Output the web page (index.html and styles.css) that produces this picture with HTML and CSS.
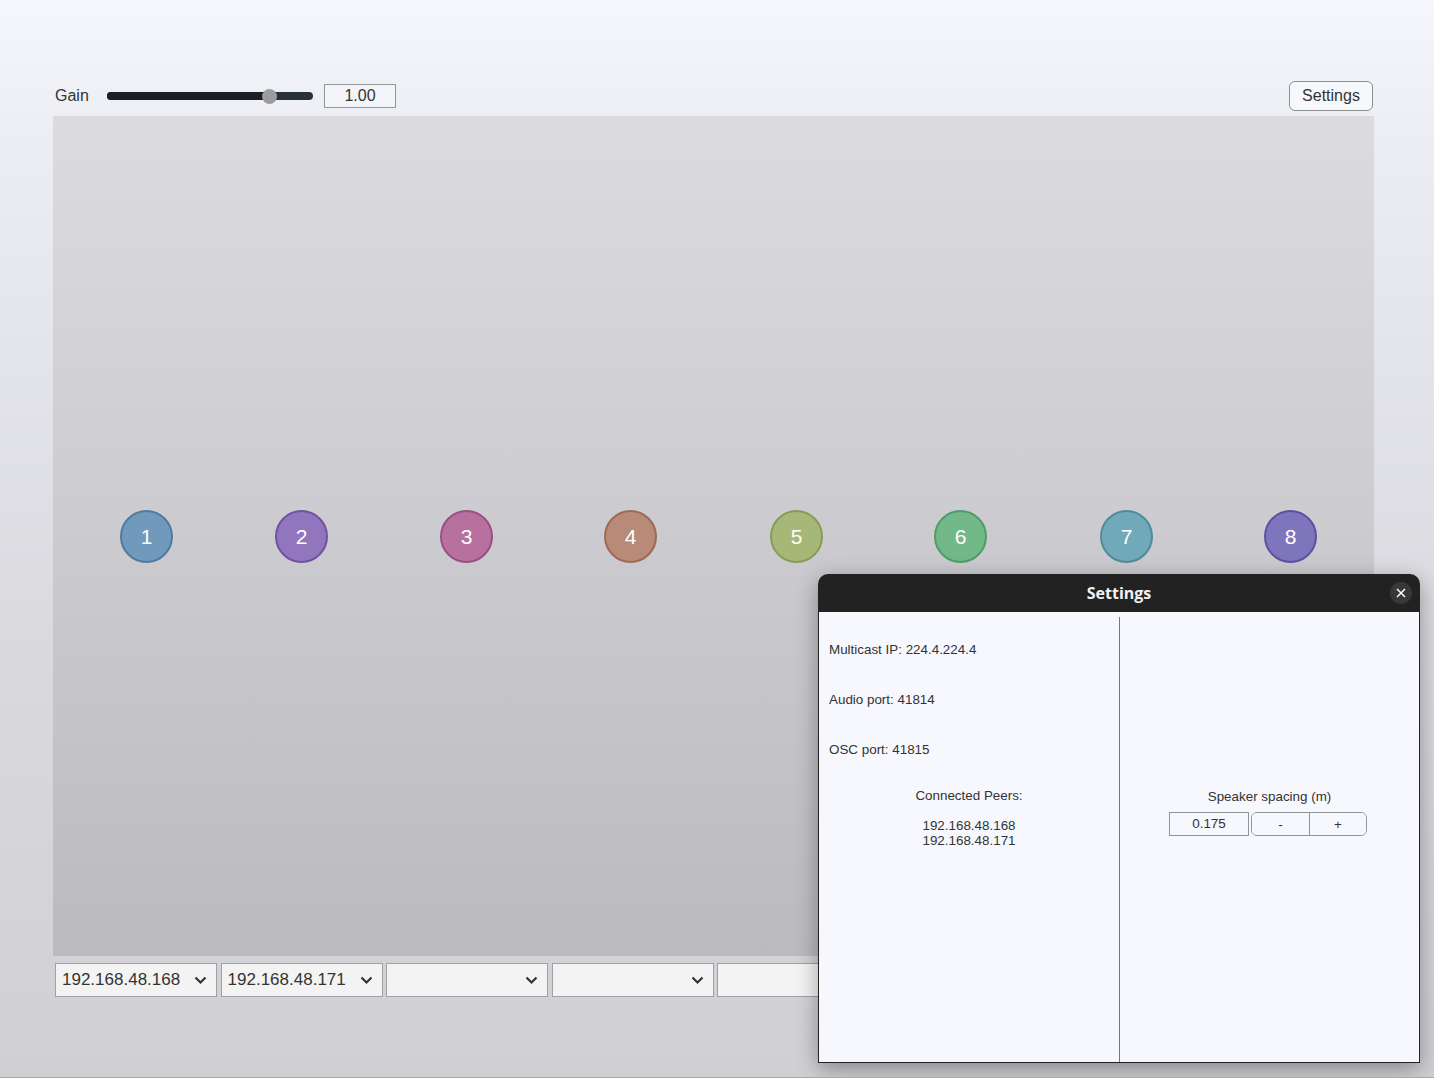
FILE: index.html
```html
<!DOCTYPE html>
<html>
<head>
<meta charset="utf-8">
<link rel="stylesheet" href="styles.css">
</head>
<body>
<div class="app">
  <div class="topbar">
    <div class="gain">
      <span class="gain-label">Gain</span>
      <div class="slider">
        <div class="track-fill"></div>
        <div class="thumb"></div>
      </div>
      <div class="gain-value">1.00</div>
    </div>
    <button class="settings-btn">Settings</button>
  </div>
  <div class="stage">
    <div class="spk s1" style="left:93px">1</div>
    <div class="spk s2" style="left:248px">2</div>
    <div class="spk s3" style="left:413px">3</div>
    <div class="spk s4" style="left:577px">4</div>
    <div class="spk s5" style="left:743px">5</div>
    <div class="spk s6" style="left:907px">6</div>
    <div class="spk s7" style="left:1073px">7</div>
    <div class="spk s8" style="left:1237px">8</div>
  </div>
  <div class="selects">
    <div class="sel"><span>192.168.48.168</span><svg width="13" height="9" viewBox="0 0 13 9"><path d="M1.5 1.5 L6.5 6.5 L11.5 1.5" fill="none" stroke="#333" stroke-width="2.2"/></svg></div>
    <div class="sel"><span>192.168.48.171</span><svg width="13" height="9" viewBox="0 0 13 9"><path d="M1.5 1.5 L6.5 6.5 L11.5 1.5" fill="none" stroke="#333" stroke-width="2.2"/></svg></div>
    <div class="sel"><span></span><svg width="13" height="9" viewBox="0 0 13 9"><path d="M1.5 1.5 L6.5 6.5 L11.5 1.5" fill="none" stroke="#333" stroke-width="2.2"/></svg></div>
    <div class="sel"><span></span><svg width="13" height="9" viewBox="0 0 13 9"><path d="M1.5 1.5 L6.5 6.5 L11.5 1.5" fill="none" stroke="#333" stroke-width="2.2"/></svg></div>
    <div class="sel"><span></span><svg width="13" height="9" viewBox="0 0 13 9"><path d="M1.5 1.5 L6.5 6.5 L11.5 1.5" fill="none" stroke="#333" stroke-width="2.2"/></svg></div>
    <div class="sel"><span></span><svg width="13" height="9" viewBox="0 0 13 9"><path d="M1.5 1.5 L6.5 6.5 L11.5 1.5" fill="none" stroke="#333" stroke-width="2.2"/></svg></div>
    <div class="sel"><span></span><svg width="13" height="9" viewBox="0 0 13 9"><path d="M1.5 1.5 L6.5 6.5 L11.5 1.5" fill="none" stroke="#333" stroke-width="2.2"/></svg></div>
    <div class="sel"><span></span><svg width="13" height="9" viewBox="0 0 13 9"><path d="M1.5 1.5 L6.5 6.5 L11.5 1.5" fill="none" stroke="#333" stroke-width="2.2"/></svg></div>
  </div>
</div>

<div class="dialog">
  <div class="dialog-head">
    <span class="dialog-title">Settings</span>
    <div class="close"><svg width="10" height="10" viewBox="0 0 10 10"><path d="M1 1 L9 9 M9 1 L1 9" stroke="#fff" stroke-width="1.5"/></svg></div>
  </div>
  <div class="dialog-body">
    <div class="col left">
      <p class="info first">Multicast IP: 224.4.224.4</p>
      <p class="info">Audio port: 41814</p>
      <p class="info">OSC port: 41815</p>
      <p class="peers-title">Connected Peers:</p>
      <div class="peers">
        <div>192.168.48.168</div>
        <div>192.168.48.171</div>
      </div>
    </div>
    <div class="col right">
      <p class="spacing-title">Speaker spacing (m)</p>
      <div class="spacing-row">
        <div class="spacing-value">0.175</div>
        <div class="btn-group">
          <button class="step">-</button>
          <button class="step">+</button>
        </div>
      </div>
    </div>
  </div>
</div>
</body>
</html>
```
FILE: styles.css
```css
html, body {
  margin: 0;
  padding: 0;
}
body {
  width: 1434px;
  height: 1077px;
  border-bottom: 1px solid #a8a8ac;
  background: linear-gradient(180deg, #f6f7fc 0%, #eceef4 12%, #d9d9de 60%, #cfcfd4 100%);
  font-family: "Liberation Sans", Arial, sans-serif;
  color: #333;
  position: relative;
  overflow: hidden;
}
.app {
  padding: 81px 0 0 53px;
  width: 1321px;
}
.topbar {
  height: 30px;
  display: flex;
  align-items: center;
  justify-content: space-between;
}
.gain {
  display: flex;
  align-items: center;
  height: 30px;
}
.gain-label {
  font-size: 16px;
  width: 34px;
  margin-left: 2px;
  color: #333;
}
.slider {
  margin-left: 18px;
  width: 206px;
  height: 8px;
  border-radius: 4px;
  background: #2a3138;
  position: relative;
}
.track-fill {
  width: 162px;
  height: 8px;
  border-radius: 4px;
  background: #1b1f23;
}
.thumb {
  position: absolute;
  left: 155px;
  top: -3.5px;
  width: 15px;
  height: 15px;
  border-radius: 50%;
  background: #9c9c9c;
}
.gain-value {
  margin-left: 11px;
  width: 70px;
  height: 22px;
  border: 1px solid #8f9797;
  background: #f4f5f8;
  font-size: 16px;
  text-align: center;
  line-height: 22px;
  color: #333;
}
.settings-btn {
  width: 84px;
  height: 30px;
  border: 1px solid #8c9090;
  border-radius: 6px;
  background: #f7f8fb;
  font-family: "Liberation Sans", Arial, sans-serif;
  font-size: 16px;
  color: #333;
  padding: 0;
  margin-right: 1px;
}
.stage {
  margin-top: 5px;
  height: 840px;
  background: linear-gradient(180deg, #dcdbe0 0%, #bbbabf 100%);
  position: relative;
}
.spk {
  position: absolute;
  top: 394px;
  width: 49px;
  height: 49px;
  margin-left: -26px;
  border-radius: 50%;
  border: 2px solid;
  color: #fff;
  font-size: 21px;
  display: flex;
  align-items: center;
  justify-content: center;
}
.s1 { background: #7199bb; border-color: #4f7b9f; }
.s2 { background: #9276bd; border-color: #6f52a0; }
.s3 { background: #b8719f; border-color: #9a4f83; }
.s4 { background: #b88a78; border-color: #9c6a56; }
.s5 { background: #a5b878; border-color: #879c55; }
.s6 { background: #72b889; border-color: #4f9c67; }
.s7 { background: #72a9b8; border-color: #4f8b9c; }
.s8 { background: #7f75bd; border-color: #5c51a0; }
.selects {
  margin-top: 7px;
  margin-left: 2px;
  display: flex;
  gap: 3.4px;
}
.sel {
  flex: 0 0 162.2px;
  box-sizing: border-box;
  height: 34px;
  border: 1px solid #9ba3a3;
  background: #f3f3f3;
  display: flex;
  align-items: center;
  justify-content: space-between;
  padding: 0 9px 0 6px;
  font-size: 17px;
  color: #333;
}
.dialog {
  position: absolute;
  left: 818px;
  top: 574px;
  width: 602px;
  height: 489px;
  box-sizing: border-box;
  border-radius: 10px 10px 0 0;
  background: #222222;
  box-shadow: 0 6px 22px rgba(0, 0, 0, 0.35);
  display: flex;
  flex-direction: column;
  padding: 0 1px 1px 1px;
}
.dialog-head {
  height: 38px;
  flex: 0 0 38px;
  display: flex;
  align-items: center;
  justify-content: center;
  position: relative;
}
.dialog-title {
  color: #f2f2f2;
  font-family: "Open Sans", sans-serif;
  font-weight: bold;
  font-size: 16px;
}
.close {
  position: absolute;
  right: 7px;
  top: 8px;
  width: 22px;
  height: 22px;
  border-radius: 50%;
  background: #383838;
  display: flex;
  align-items: center;
  justify-content: center;
}
.dialog-body {
  flex: 1;
  background: #f7f8fe;
  display: flex;
  padding-top: 5px;
}
.col {
  box-sizing: border-box;
  font-size: 13.4px;
  color: #333;
}
.col.left {
  width: 301px;
  border-right: 1px solid #777;
  padding-left: 10px;
}
.col.right {
  width: 299px;
  display: flex;
  flex-direction: column;
  align-items: center;
}
.info {
  margin: 0;
  height: 50px;
  line-height: 15px;
}
.info.first {
  margin-top: 25px;
}
.peers-title {
  margin: -4px 0 0 -10px;
  text-align: center;
  line-height: 15px;
}
.peers {
  margin: 15px 0 0 -10px;
  text-align: center;
  line-height: 15px;
}
.spacing-title {
  margin: 172px 0 0 0;
  line-height: 15px;
}
.spacing-row {
  margin-top: 8px;
  display: flex;
  margin-left: -3px;
}
.spacing-value {
  width: 78px;
  height: 22px;
  border: 1px solid #8f9797;
  text-align: center;
  line-height: 22px;
  font-size: 13.4px;
}
.btn-group {
  margin-left: 2px;
  display: flex;
  border: 1px solid #8f9797;
  border-radius: 6px;
  overflow: hidden;
}
.step {
  width: 57px;
  height: 22px;
  border: 0;
  background: #f7f8fe;
  font-family: "Liberation Sans", Arial, sans-serif;
  font-size: 13.4px;
  color: #333;
  padding: 0;
}
.step + .step {
  border-left: 1px solid #8f9797;
}
```
